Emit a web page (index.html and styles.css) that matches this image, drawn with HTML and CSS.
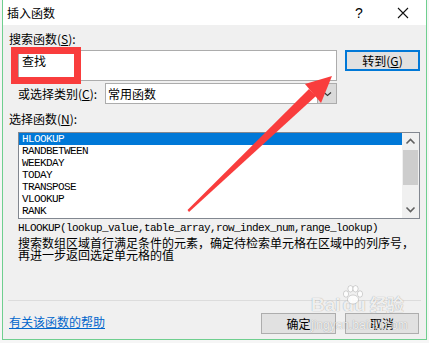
FILE: index.html
```html
<!DOCTYPE html>
<html lang="zh-CN">

<head>
    <meta charset="UTF-8">
    <meta name="viewport" content="width=device-width, initial-scale=1.0">
    <title>插入函数</title>
    <link rel="stylesheet" href="styles.css">
</head>

<body>
    <div class="dialog">
        <div class="titlebar">
            <span class="title">插入函数</span>
            <span class="help">?</span>
            <span class="close">
                <svg width="12" height="12" viewBox="0 0 12 12">
                    <path d="M1 1 L11 11 M11 1 L1 11" stroke="#111" stroke-width="1.1" fill="none" />
                </svg>
            </span>
        </div>
        <div class="content">
            <div class="label">搜索函数(<u>S</u>):</div>
            <div class="search-row">
                <div class="search-box">查找</div>
                <button class="btn btn-go">转到(<u>G</u>)</button>
            </div>
            <div class="category-row">
                <span class="cat-label">或选择类别(<u>C</u>):</span>
                <div class="select">
                    <span class="select-value">常用函数</span>
                    <span class="select-arrow">
                        <svg width="9" height="6" viewBox="0 0 9 6">
                            <path d="M1 1.5 L4.5 4.5 L8 1.5" stroke="#333" stroke-width="1.1" fill="none" />
                        </svg>
                    </span>
                </div>
            </div>
            <div class="label label-list">选择函数(<u>N</u>):</div>
            <div class="listbox">
                <ul class="items">
                    <li class="selected">HLOOKUP</li>
                    <li>RANDBETWEEN</li>
                    <li>WEEKDAY</li>
                    <li>TODAY</li>
                    <li>TRANSPOSE</li>
                    <li>VLOOKUP</li>
                    <li>RANK</li>
                </ul>
                <div class="scrollbar">
                    <svg class="sb-btn" width="17" height="17" viewBox="0 0 17 17">
                        <path d="M4.5 10.5 L8.5 6.5 L12.5 10.5" stroke="#606060" stroke-width="1.6" fill="none" />
                    </svg>
                    <div class="sb-track">
                        <div class="sb-thumb"></div>
                    </div>
                    <svg class="sb-btn" width="17" height="17" viewBox="0 0 17 17">
                        <path d="M4.5 6.5 L8.5 10.5 L12.5 6.5" stroke="#606060" stroke-width="1.6" fill="none" />
                    </svg>
                </div>
            </div>
            <div class="syntax">HLOOKUP(lookup_value,table_array,row_index_num,range_lookup)</div>
            <div class="desc">搜索数组区域首行满足条件的元素，确定待检索单元格在区域中的列序号，<br>再进一步返回选定单元格的值</div>
        </div>
        <div class="separator"></div>
        <div class="footer">
            <a class="help-link" href="#">有关该函数的帮助</a>
            <button class="btn btn-ok">确定</button>
            <button class="btn btn-cancel">取消</button>
        </div>
    </div>

    <!-- annotations drawn over the screenshot -->
    <div class="mark-box"></div>
    <svg class="arrow" width="429" height="343" viewBox="0 0 429 343">
        <polygon points="187.5,210 189,212 316,96 309,89" fill="#f93d3d" />
        <polygon points="332,76 305,84 321,103" fill="#f93d3d" />
    </svg>
    <div class="watermark">
        <svg class="wm-paw" width="22" height="20" viewBox="0 0 22 20">
            <g fill="rgba(255,255,255,0.85)" stroke="rgba(0,0,0,0.2)" stroke-width="0.8">
                <ellipse cx="4" cy="9" rx="2.6" ry="3.2" />
                <ellipse cx="8.5" cy="3.8" rx="2.6" ry="3.2" />
                <ellipse cx="13.5" cy="3.8" rx="2.6" ry="3.2" />
                <ellipse cx="18" cy="9" rx="2.6" ry="3.2" />
                <ellipse cx="11" cy="14.5" rx="5.5" ry="4.5" />
            </g>
        </svg>
        <div class="wm-logo">Bai<span class="wm-du">du</span><span class="wm-cn">经验</span></div>
        <div class="wm-url">jingyan.baidu.com</div>
    </div>
</body>

</html>
```

FILE: styles.css
```css
body {
    margin: 0;
    width: 429px;
    height: 343px;
    overflow: hidden;
    background: #f6f6f6;
    font-family: 'Noto Sans CJK SC', sans-serif;
    font-size: 12px;
    color: #000;
    position: relative;
}

.dialog {
    margin-left: 2px;
    width: 423px;
    height: 339px;
    background: #f0f0f0;
    border: 1px solid #6fcf8f;
    border-top: none;
    display: flex;
    flex-direction: column;
}

.titlebar {
    height: 25px;
    background: #ffffff;
    display: flex;
    align-items: center;
    padding-left: 4px;
}

.title {
    flex: 1;
    font-size: 12px;
    line-height: 14px;
    margin-top: 1px;
}

.help {
    font-family: 'Liberation Sans', sans-serif;
    font-size: 14px;
    width: 14px;
    text-align: center;
    margin-right: 31px;
}

.close {
    display: flex;
    margin-right: 17px;
}

.content {
    height: 275px;
    padding-left: 6px;
    box-sizing: border-box;
}

.label {
    margin-top: 7px;
    height: 14px;
    line-height: 14px;
}

.label-list {
    margin-top: 8px;
}

.search-row {
    display: flex;
    align-items: flex-start;
    margin-top: 4px;
    margin-left: 9px;
    gap: 8px;
}

.search-box {
    width: 319px;
    height: 31px;
    box-sizing: border-box;
    background: #fff;
    border: 1px solid #acacac;
    padding: 2px 3px;
    line-height: 16px;
}

.btn {
    font-family: 'Noto Sans CJK SC', sans-serif;
    font-size: 12px;
    background: #e1e1e1;
    border: 1px solid #adadad;
    height: 21px;
    box-sizing: border-box;
    padding: 0;
    line-height: 17px;
    color: #000;
}

.btn-go {
    width: 75px;
    border: 2px solid #0078d7;
    line-height: 15px;
}

.category-row {
    display: flex;
    align-items: center;
    margin-top: 2px;
    margin-left: 9px;
    height: 21px;
}

.cat-label {
    width: 87px;
}

.select {
    width: 232px;
    height: 21px;
    box-sizing: border-box;
    background: #fff;
    border: 1px solid #acacac;
    display: flex;
    align-items: center;
}

.select-value {
    flex: 1;
    padding-left: 2px;
}

.select-arrow {
    width: 18px;
    height: 19px;
    background: #dadada;
    border-left: 1px solid #acacac;
    display: flex;
    align-items: center;
    justify-content: center;
}

.listbox {
    margin-top: 6px;
    margin-left: 9px;
    width: 402px;
    height: 87px;
    box-sizing: border-box;
    border: 1px solid #828790;
    background: #fff;
    display: flex;
}

.items {
    list-style: none;
    margin: 0;
    padding: 0;
    flex: 1;
    font-family: 'Liberation Mono', monospace;
    font-size: 11px;
    letter-spacing: -0.6px;
}

.items li {
    height: 12px;
    line-height: 12px;
    padding-left: 3px;
}

.items li.selected {
    background: #0078d7;
    color: #fff;
}

.scrollbar {
    width: 17px;
    background: #f0f0f0;
    display: flex;
    flex-direction: column;
}

.sb-track {
    flex: 1;
}

.sb-thumb {
    margin: 0 1px;
    height: 35px;
    background: #cdcdcd;
}

.syntax {
    margin-top: 3px;
    margin-left: 9px;
    height: 12px;
    line-height: 12px;
    font-family: 'Liberation Mono', monospace;
    font-size: 11px;
    letter-spacing: -0.6px;
}

.desc {
    margin-top: 3px;
    margin-left: 9px;
    line-height: 12px;
    font-size: 12px;
}

.separator {
    height: 1px;
    margin: 0 5px;
    background: #dcdcdc;
}

.footer {
    flex: 1;
    display: flex;
    align-items: flex-start;
    padding: 12px 7px 0 6px;
}

.help-link {
    color: #0066cc;
    line-height: 14px;
    margin-top: 2px;
}

.btn-ok {
    margin-left: auto;
    width: 75px;
}

.btn-cancel {
    margin-left: 9px;
    width: 74px;
}

.mark-box {
    position: absolute;
    left: 11px;
    top: 47px;
    width: 70px;
    height: 37px;
    box-sizing: border-box;
    border: 7px solid #f93d3d;
}

.arrow {
    position: absolute;
    left: 0;
    top: 0;
    pointer-events: none;
}

.watermark {
    position: absolute;
    left: 311px;
    top: 293px;
    color: rgba(255, 255, 255, 0.85);
    text-shadow: 0 0 1px rgba(0, 0, 0, 0.4);
    pointer-events: none;
}

.wm-paw {
    position: absolute;
    left: 31px;
    top: -8px;
}

.wm-logo {
    font-family: 'Liberation Sans', sans-serif;
    font-weight: bold;
    font-size: 19px;
    line-height: 22px;
}

.wm-du {
    margin-left: 2px;
}

.wm-cn {
    font-family: 'Noto Sans CJK SC', sans-serif;
    font-size: 17px;
    margin-left: 4px;
}

.wm-url {
    font-family: 'Liberation Sans', sans-serif;
    font-size: 12px;
    line-height: 14px;
    margin-top: 2px;
}
```
